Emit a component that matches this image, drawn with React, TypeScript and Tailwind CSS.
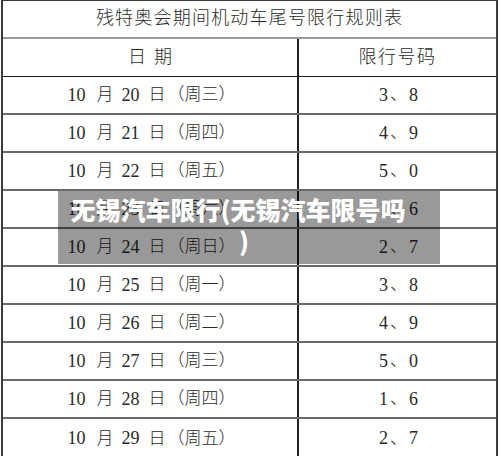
import React from "react";

const rows: [string, string, string, string][] = [
  ["20", "三", "3", "8"],
  ["21", "四", "4", "9"],
  ["22", "五", "5", "0"],
  ["23", "六", "1", "6"],
  ["24", "日", "2", "7"],
  ["25", "一", "3", "8"],
  ["26", "二", "4", "9"],
  ["27", "三", "5", "0"],
  ["28", "四", "1", "6"],
  ["29", "五", "2", "7"],
];

export default function App() {
  return (
    <div className="relative w-[500px] h-[456px] bg-white overflow-hidden">
      <div
        className="ml-[1px] w-[497px] border-l-2 border-r-2 border-t border-[#3a3a3a] text-[#2a2a2a] font-light"
        style={{ fontFamily: '"Liberation Serif", "Noto Sans CJK SC", serif' }}
      >
        <div className="h-[38px] flex items-center justify-center border-b-2 border-[#9a9a9a] text-[18px] tracking-[1.2px] pb-[1px]">
          残特奥会期间机动车尾号限行规则表
        </div>
        <div className="h-[38px] flex border-b border-[#1a1a1a] text-[18px]">
          <div className="w-[296px] flex items-center justify-center border-r-2 border-[#222] tracking-[8px] pl-[8px]">
            日期
          </div>
          <div className="flex-1 flex items-center justify-center tracking-[1.5px]">
            限行号码
          </div>
        </div>
        {rows.map((r, i) => (
          <div
            key={i}
            className={
              "flex text-[17px] " +
              (i === rows.length - 1 ? "h-[39px]" : "h-[38px] border-b-2 border-[#6a6a6a]")
            }
          >
            <div className="w-[296px] flex items-center justify-center border-r-2 border-[#222] pl-[3px]">
              <span className="text-[18px]">10</span>
              <span className="ml-[11px]">月</span>
              <span className="ml-[8px] text-[18px]">{r[0]}</span>
              <span className="ml-[9px]">日</span>
              <span className="ml-[2px]">（周{r[1]}）</span>
            </div>
            <div className="flex-1 flex items-center justify-center pl-[2px]">
              <span className="text-[18px]">{r[2]}</span>
              <span className="mx-[2px]">、</span>
              <span className="text-[18px]">{r[3]}</span>
            </div>
          </div>
        ))}
      </div>
      <div className="absolute left-[58px] top-[191px] w-[382px] h-[73px] bg-black/40 flex flex-col items-center pt-[3px] pr-[22px]">
        <div
          className="text-white font-black text-[25px] leading-[31px] text-center"
          style={{ fontFamily: '"Noto Sans CJK SC", sans-serif' }}
        >
          <div>无锡汽车限行(无锡汽车限号吗</div>
          <div className="pl-[12px]">)</div>
        </div>
      </div>
    </div>
  );
}
